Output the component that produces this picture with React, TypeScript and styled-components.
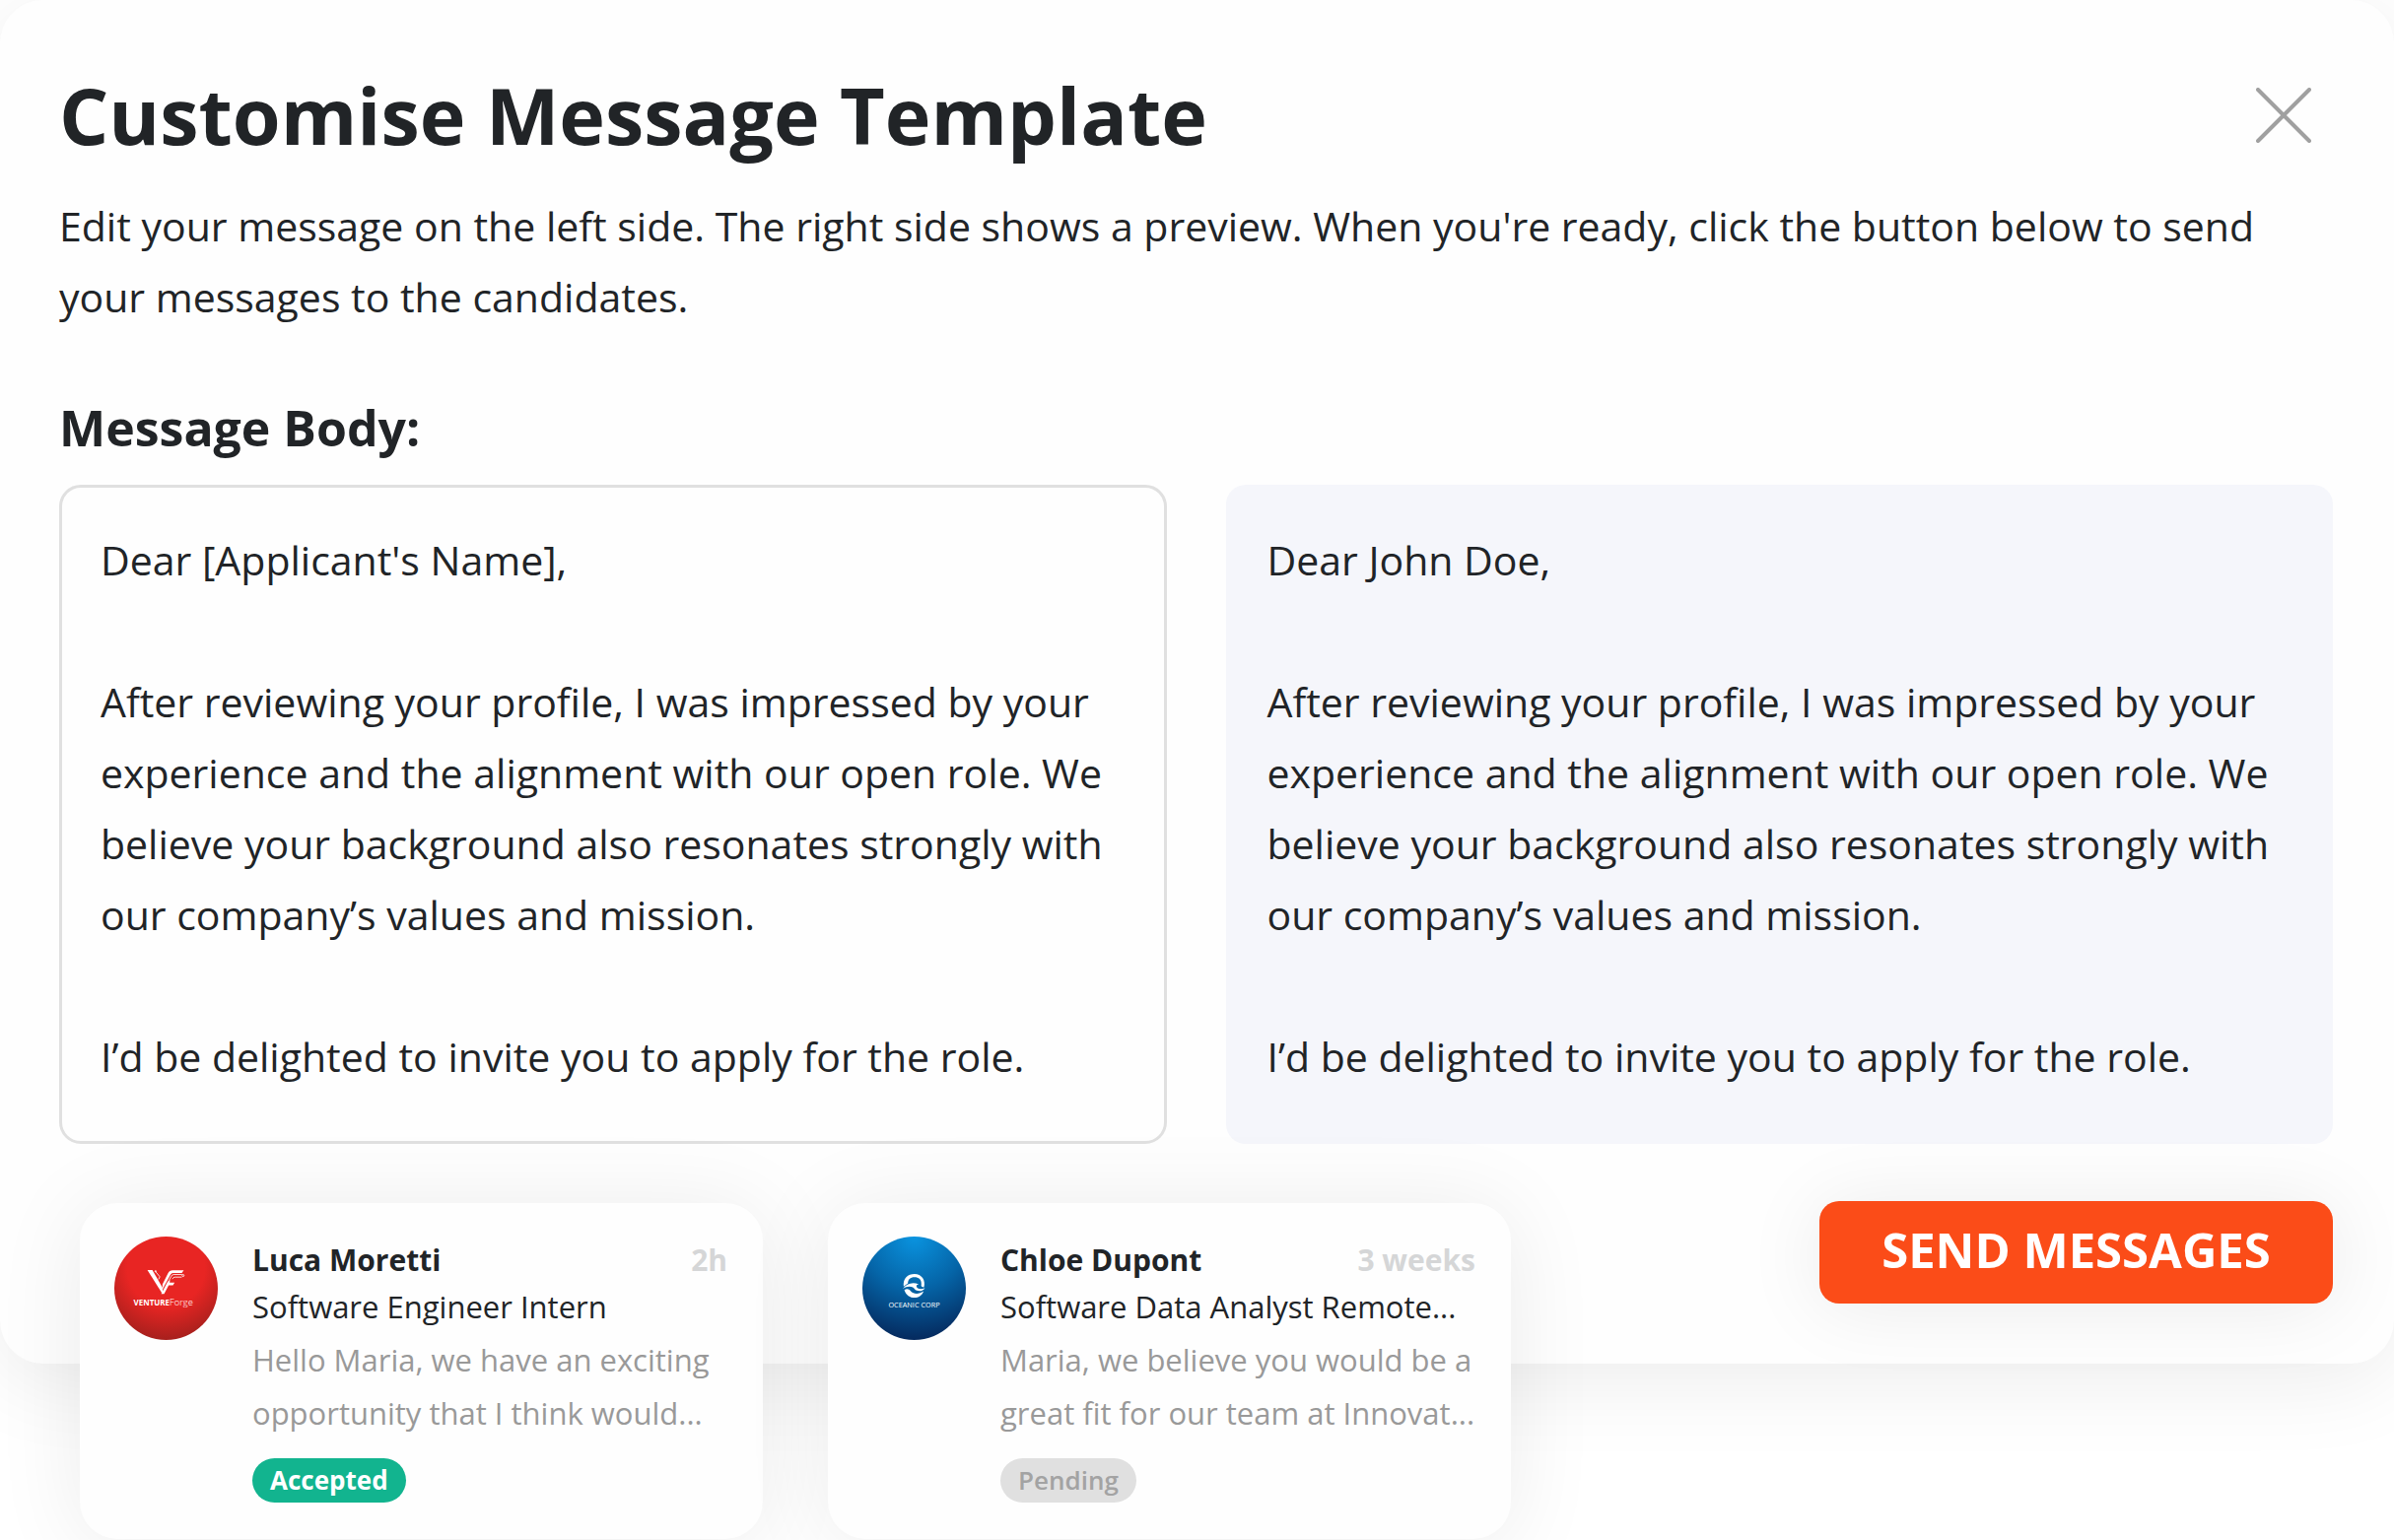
import React, { useState } from "react";
import styled, { createGlobalStyle } from "styled-components";

const GlobalStyle = createGlobalStyle`
  * { box-sizing: border-box; }
  body {
    margin: 0;
    background: #ffffff;
    color: #212427;
    font-family: "Open Sans", "Noto Sans", sans-serif;
  }
  h1, h2, h3, p { margin: 0; }
`;

const Page = styled.main`
  min-height: 100vh;
  overflow: hidden;
`;

const Dialog = styled.section`
  padding: 66px 62px 61px 60px;
  border-radius: 44px;
  background: #fefefe;
  box-shadow: 0 16px 90px rgba(0, 0, 0, 0.08);
`;

const Header = styled.header`
  display: flex;
  align-items: center;
  justify-content: space-between;
  padding-right: 22px;
`;

const Title = styled.h1`
  font-size: 79px;
  line-height: 102px;
  font-weight: 700;
`;

const CloseButton = styled.button`
  display: flex;
  padding: 0;
  border: 0;
  background: none;
  color: #a0a0a0;
  cursor: pointer;
`;

const Intro = styled.p`
  margin-top: 25px;
  font-size: 41px;
  line-height: 72px;
`;

const BodyLabel = styled.label`
  display: block;
  margin-top: 65px;
  font-size: 50px;
  line-height: 64px;
  font-weight: 700;
`;

const Panels = styled.div`
  display: grid;
  grid-template-columns: 1fr 1fr;
  gap: 60px;
  margin-top: 26px;
`;

const Editor = styled.textarea`
  display: block;
  width: 100%;
  padding: 37px 36px 50px 39px;
  border: 3px solid #e0e0e0;
  border-radius: 22px;
  outline: 0;
  resize: none;
  overflow: hidden;
  background: transparent;
  color: inherit;
  font-family: inherit;
  font-size: 41px;
  line-height: 72px;
`;

const Preview = styled.div`
  padding: 40px 36px 50px 42px;
  border-radius: 20px;
  background: #f5f6fb;
  font-size: 41px;
  line-height: 72px;
  white-space: pre-wrap;
`;

const Footer = styled.footer`
  display: flex;
  align-items: flex-start;
  justify-content: space-between;
  margin-top: 58px;
  padding-left: 21px;
`;

/* The cards hang over the lower edge of the dialog. */
const Cards = styled.div`
  display: flex;
  gap: 66px;
  margin: 2px 0 -240px;
`;

const Card = styled.article`
  display: flex;
  gap: 35px;
  width: 693px;
  min-height: 341px;
  padding: 34px 36px 36px 35px;
  border-radius: 38px;
  background: #fefefe;
  box-shadow: 0 6px 90px rgba(0, 0, 0, 0.08);
`;

const Avatar = styled.svg`
  flex: none;
  width: 105px;
  height: 105px;
`;

const CardBody = styled.div`
  flex: 1;
  min-width: 0;
`;

const CardTop = styled.div`
  display: flex;
  justify-content: space-between;
  font-size: 30px;
  line-height: 48px;
  font-weight: 700;
`;

const Name = styled.h3`
  font: inherit;
`;

const Age = styled.time`
  color: #d5d6d7;
`;

const Role = styled.p`
  font-size: 31px;
  line-height: 46px;
  white-space: nowrap;
`;

const Excerpt = styled.p`
  margin-top: 4px;
  color: #999999;
  font-size: 31px;
  line-height: 54px;
  white-space: pre;
`;

const Badge = styled.span<{ $accepted: boolean }>`
  display: inline-block;
  margin-top: 19px;
  padding: 0 18px;
  border-radius: 23px;
  background: ${(p) => (p.$accepted ? "#12b48f" : "#e0e0e0")};
  color: ${(p) => (p.$accepted ? "#ffffff" : "#a3a3a3")};
  font-size: 26px;
  line-height: 45px;
  font-weight: ${(p) => (p.$accepted ? 700 : 600)};
`;

const SendButton = styled.button`
  width: 521px;
  height: 104px;
  padding: 0 0 6px;
  border: 0;
  border-radius: 20px;
  background: #fb4c18;
  box-shadow: 0 4px 80px rgba(0, 0, 0, 0.08);
  color: #ffffff;
  font-family: inherit;
  font-size: 49px;
  font-weight: 700;
  white-space: nowrap;
  cursor: pointer;
`;

const VentureLogo = () => (
  <Avatar viewBox="33 33 316 316" role="img" aria-label="VentureForge">
    <defs>
      <radialGradient id="venture" cx="0.5" cy="0.3" r="0.75">
        <stop offset="0.5" stopColor="#e82523" />
        <stop offset="1" stopColor="#9d1f1c" />
      </radialGradient>
    </defs>
    <circle cx="191" cy="191" r="158" fill="url(#venture)" />
    <g fill="#ffffff">
      <path d="M134 135 h15 l24 42 8 14 -1 17 z" />
      <path d="M180 179 l17 -34 q4 -9 14 -9 h34 l-6 8 h-27 q-5 0 -8 6 l-24 44 z" />
      <path d="M197 170 l6 -5 -1 9 h15 l-5 8 h-13 l-14 26 h-9 l20 -37 z" />
    </g>
    <g fill="none" stroke="#ffffff" strokeWidth="2.5">
      <path d="M240 149 h-26 q-5 0 -8 7 l-6 11" />
      <path d="M239 157 h-21 q-5 0 -8 6" />
      <circle cx="243" cy="152" r="3" />
      <path d="M158 139 l14 17 -4 8" />
      <circle cx="159" cy="139" r="2" />
    </g>
    <text x="92" y="245" fill="#ffffff" fontSize="24" fontWeight="700">
      VENTURE<tspan fontSize="28" fontWeight="300">Forge</tspan>
    </text>
  </Avatar>
);

const OceanicLogo = () => (
  <Avatar viewBox="31 33 316 316" role="img" aria-label="Oceanic Corp">
    <defs>
      <radialGradient id="oceanic" cx="0.5" cy="0" r="1">
        <stop offset="0" stopColor="#0a94e0" />
        <stop offset="0.5" stopColor="#0565a8" />
        <stop offset="1" stopColor="#052a5e" />
      </radialGradient>
    </defs>
    <circle cx="189" cy="191" r="158" fill="url(#oceanic)" />
    <path
      fill="#ffffff"
      d="M157 186 C154 160 170 147 190 147 C212 147 225 166 219 188 C213 188 209 185 211 179 C212 164 203 157 190 157 C177 157 170 164 170 176 C166 179 161 182 157 186 Z"
    />
    <path
      fill="#ffffff"
      d="M154 193 C166 177 184 171 203 179 C196 180 194 185 199 190 C205 194 213 194 222 190 C215 201 204 201 193 196 C185 184 170 182 154 193 Z"
    />
    <path
      fill="#ffffff"
      d="M159 196 C167 191 173 193 178 199 C188 210 203 210 218 200 C208 228 168 226 159 196 Z"
    />
    <text x="189" y="251" fill="#ffffff" fontSize="22" fontWeight="500" textAnchor="middle">
      OCEANIC CORP
    </text>
  </Avatar>
);

const letter = (name: string) =>
  `Dear ${name},

After reviewing your profile, I was impressed by your experience and the alignment with our open role. We believe your background also resonates strongly with our company’s values and mission.

I’d be delighted to invite you to apply for the role.`;

const candidates = [
  {
    logo: <VentureLogo />,
    name: "Luca Moretti",
    age: "2h",
    role: "Software Engineer Intern",
    excerpt: "Hello Maria, we have an exciting\nopportunity that I think would...",
    status: "Accepted",
  },
  {
    logo: <OceanicLogo />,
    name: "Chloe Dupont",
    age: "3 weeks",
    role: "Software Data Analyst Remote...",
    excerpt: "Maria, we believe you would be a\ngreat fit for our team at Innovat...",
    status: "Pending",
  },
];

export default function App() {
  const [message, setMessage] = useState(letter("[Applicant's Name]"));

  return (
    <Page>
      <GlobalStyle />
      <Dialog role="dialog" aria-labelledby="dialog-title">
        <Header>
          <Title id="dialog-title">Customise Message Template</Title>
          <CloseButton type="button" aria-label="Close">
            <svg width="56" height="56" viewBox="0 0 56 56" fill="none" stroke="currentColor" strokeWidth="4" strokeLinecap="round">
              <path d="M2 2 L54 54 M54 2 L2 54" />
            </svg>
          </CloseButton>
        </Header>
        <Intro>
          Edit your message on the left side. The right side shows a preview. When you're ready,
          click the button below to send your messages to the candidates.
        </Intro>
        <BodyLabel htmlFor="message-body">Message Body:</BodyLabel>
        <Panels>
          <Editor
            id="message-body"
            rows={8}
            spellCheck={false}
            value={message}
            onChange={(e) => setMessage(e.target.value)}
          />
          <Preview>{message.replace("[Applicant's Name]", "John Doe")}</Preview>
        </Panels>
        <Footer>
          <Cards>
            {candidates.map((c) => (
              <Card key={c.name}>
                {c.logo}
                <CardBody>
                  <CardTop>
                    <Name>{c.name}</Name>
                    <Age>{c.age}</Age>
                  </CardTop>
                  <Role>{c.role}</Role>
                  <Excerpt>{c.excerpt}</Excerpt>
                  <Badge $accepted={c.status === "Accepted"}>{c.status}</Badge>
                </CardBody>
              </Card>
            ))}
          </Cards>
          <SendButton type="button">SEND MESSAGES</SendButton>
        </Footer>
      </Dialog>
    </Page>
  );
}
